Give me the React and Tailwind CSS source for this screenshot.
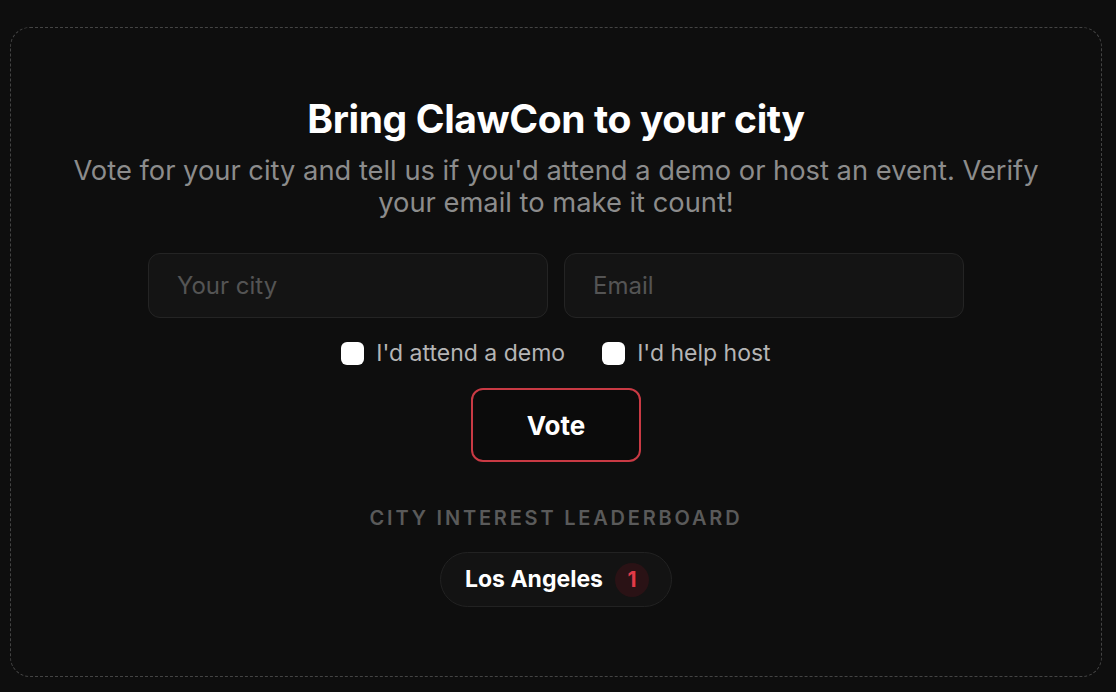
export default function App() {
  return (
    <div className="min-h-[692px] w-full bg-[#0e0e0e] pl-[10px] pr-[14px] pt-[27px] pb-[16px]" style={{ fontFamily: "Inter, 'Noto Sans', sans-serif" }}>
      <div className="flex h-[650px] flex-col items-center rounded-[20px] border border-dashed border-[#444] pt-[68px]">
        <h1 className="text-[39px] font-bold leading-[46px] tracking-[-0.01em] text-white">Bring ClawCon to your city</h1>
        <p className="mt-[13px] max-w-[1000px] text-center text-[27.3px] leading-[32px] text-[#8c8c8c]">
          Vote for your city and tell us if you'd attend a demo or host an event. Verify your email to make it count!
        </p>
        <div className="mt-[34px] flex gap-[16px]">
          <input
            placeholder="Your city"
            className="h-[65px] w-[400px] rounded-[12px] border border-[#242424] bg-[#141414] px-[28px] text-[24px] text-white outline-none placeholder:text-[#545454]"
          />
          <input
            placeholder="Email"
            className="h-[65px] w-[400px] rounded-[12px] border border-[#242424] bg-[#141414] px-[28px] text-[24px] text-white outline-none placeholder:text-[#545454]"
          />
        </div>
        <div className="mt-[21px] flex h-[28px] items-center gap-[37px]">
          <label className="flex items-center gap-[12px] text-[23px] text-[#b5b5b5]">
            <span className="block h-[23px] w-[23px] rounded-[6px] bg-white"></span>
            I'd attend a demo
          </label>
          <label className="flex items-center gap-[12px] text-[23px] text-[#b5b5b5]">
            <span className="block h-[23px] w-[23px] rounded-[6px] bg-white"></span>
            I'd help host
          </label>
        </div>
        <button className="mt-[21px] h-[74px] w-[170px] rounded-[12px] border-2 border-[#c93a44] bg-[#0b0b0b] text-[26px] font-bold text-white">
          Vote
        </button>
        <div className="mt-[42px] text-[20px] font-semibold leading-[28px] tracking-[0.14em] text-[#5a5a5a]">CITY INTEREST LEADERBOARD</div>
        <div className="mt-[20px] flex h-[55px] items-center gap-[12px] rounded-full border border-[#222] bg-[#131313] pl-[24px] pr-[22px]">
          <span className="text-[23px] font-bold text-white">Los Angeles</span>
          <span className="flex h-[34px] w-[34px] items-center justify-center rounded-full bg-[#2a1215] text-[21px] font-bold text-[#e23a48]">1</span>
        </div>
      </div>
    </div>
  );
}
